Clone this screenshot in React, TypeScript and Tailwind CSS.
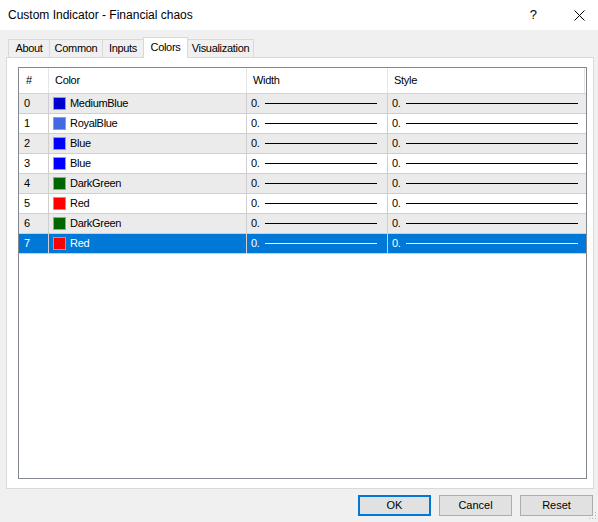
import React from 'react';

const font = { fontFamily: '"Liberation Sans", Arial, sans-serif' };

const tabs = ['About', 'Common', 'Inputs', 'Colors', 'Visualization'];
const tabWidths: Record<string, string> = {
  About: 'w-[42px]',
  Common: 'w-[54px]',
  Inputs: 'w-[42px]',
  Colors: 'w-[45px]',
  Visualization: 'w-[67px]',
};

const rows = [
  { name: 'MediumBlue', color: '#0000cd' },
  { name: 'RoyalBlue', color: '#4169e1' },
  { name: 'Blue', color: '#0000ff' },
  { name: 'Blue', color: '#0000ff' },
  { name: 'DarkGreen', color: '#006400' },
  { name: 'Red', color: '#ff0000' },
  { name: 'DarkGreen', color: '#006400' },
  { name: 'Red', color: '#ff0000' },
];

function TitleBar() {
  return (
    <div className="flex h-[30px] shrink-0 items-center bg-white pl-[8px] text-[12px] text-black">
      <span>Custom Indicator - Financial chaos</span>
      <span className="ml-auto mr-[37px] text-[13px]">?</span>
      <svg width="11" height="11" viewBox="0 0 11 11" className="mr-[13px]">
        <path d="M0.5 0.5 L10.5 10.5 M10.5 0.5 L0.5 10.5" stroke="#000" strokeWidth="1" />
      </svg>
    </div>
  );
}

function Tabs() {
  return (
    <div className="relative z-10 mt-[7px] flex h-[21px] shrink-0 items-end pl-[8px] text-[11px] tracking-[-0.3px]">
      {tabs.map((t, i) => {
        const active = t === 'Colors';
        return (
          <div
            key={t}
            className={`flex items-center justify-center border border-b-0 border-[#d9d9d9] ${tabWidths[t]} ${
              i > 0 ? '-ml-px' : ''
            } ${active ? 'h-[21px] bg-white pb-[2px]' : 'mb-px h-[18px] bg-[#f0f0f0]'}`}
          >
            {t}
          </div>
        );
      })}
    </div>
  );
}

function Line({ selected }: { selected: boolean }) {
  return <div className={`h-px flex-1 ${selected ? 'bg-white' : 'bg-black'}`} />;
}

function ColorsTable() {
  return (
    <div className="flex flex-1 flex-col border border-[#828790] bg-white text-[11px] tracking-[-0.3px]">
      <div className="flex h-[26px] shrink-0 border-b border-[#d5d5d5]">
        <div className="flex w-[30px] items-center border-r border-[#e5e5e5] pl-[7px]">#</div>
        <div className="flex w-[198px] items-center border-r border-[#e5e5e5] pl-[6px]">Color</div>
        <div className="flex w-[141px] items-center border-r border-[#e5e5e5] pl-[6px]">Width</div>
        <div className="flex w-[197px] items-center border-r border-[#e5e5e5] pl-[6px]">Style</div>
      </div>
      {rows.map((r, i) => {
        const selected = i === 7;
        const bg = selected ? 'bg-[#0078d7] text-white' : i % 2 === 0 ? 'bg-[#ebebeb]' : 'bg-white';
        return (
          <div key={i} className={`flex h-[20px] shrink-0 border-b border-[#cfcfcf] ${bg}`}>
            <div className="flex w-[30px] items-center border-r border-[#cfcfcf] pl-[5px]">{i}</div>
            <div className="flex w-[198px] items-center gap-[4px] border-r border-[#cfcfcf] pl-[4px]">
              <span
                className="h-[13px] w-[13px] border border-[#a0a0a0]"
                style={{ backgroundColor: r.color }}
              />
              <span>{r.name}</span>
            </div>
            <div className="flex w-[141px] items-center border-r border-[#cfcfcf] pl-[4px] pr-[10px]">
              <span className="mr-[5px]">0.</span>
              <Line selected={selected} />
            </div>
            <div className="flex w-[197px] items-center pl-[4px] pr-[7px]">
              <span className="mr-[5px]">0.</span>
              <Line selected={selected} />
            </div>
          </div>
        );
      })}
    </div>
  );
}

function Buttons() {
  const base = 'flex h-[21px] w-[73px] items-center justify-center bg-[#e1e1e1] text-[11px]';
  return (
    <div className="mt-[6px] flex shrink-0 justify-end gap-[8px] pr-[5px]">
      <button type="button" className={`${base} border-2 border-[#0078d7]`}>
        OK
      </button>
      <button type="button" className={`${base} border border-[#adadad]`}>
        Cancel
      </button>
      <button type="button" className={`${base} border border-[#adadad]`}>
        Reset
      </button>
    </div>
  );
}

export default function App() {
  return (
    <div className="relative flex h-[522px] w-[598px] flex-col bg-[#f0f0f0] text-black" style={font}>
      <TitleBar />
      <Tabs />
      <div className="mx-[6px] -mt-px flex h-[432px] w-[588px] shrink-0 flex-col border border-[#d9d9d9] bg-white pb-[9px] pl-[11px] pr-[6px] pt-[9px]">
        <ColorsTable />
      </div>
      <Buttons />
      <svg width="8" height="8" viewBox="0 0 8 8" className="absolute bottom-[2px] right-[1px]">
        <rect x="6" y="0" width="1" height="1" fill="#b8b8b8" />
        <rect x="3" y="3" width="1" height="1" fill="#b8b8b8" />
        <rect x="6" y="3" width="1" height="1" fill="#b8b8b8" />
        <rect x="0" y="6" width="1" height="1" fill="#b8b8b8" />
        <rect x="3" y="6" width="1" height="1" fill="#b8b8b8" />
        <rect x="6" y="6" width="1" height="1" fill="#b8b8b8" />
      </svg>
    </div>
  );
}
